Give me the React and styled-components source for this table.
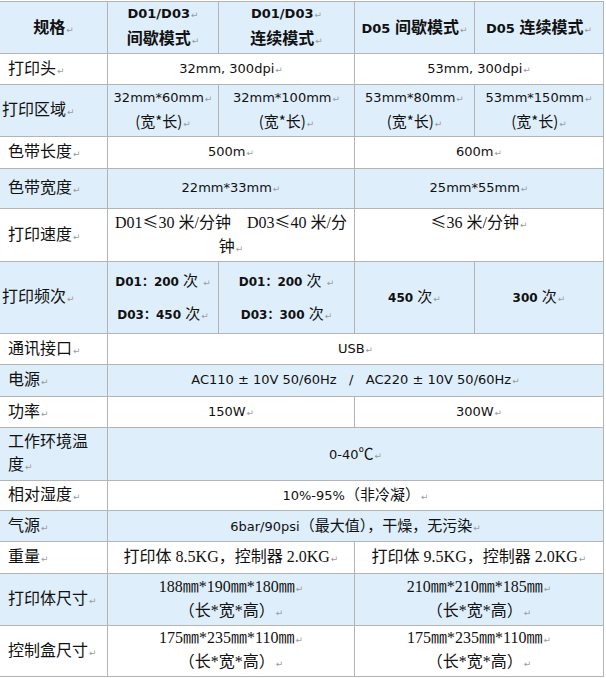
import styled, { createGlobalStyle } from "styled-components";

const GlobalStyle = createGlobalStyle`
  body {
    margin: 0;
    background: #ffffff;
    color: #111111;
    font-family: "DejaVu Sans", "Noto Sans CJK SC", sans-serif;
  }
`;

const line = "#b4b4b4";
const shade = "#deeefa";

const Table = styled.div`
  display: grid;
  grid-template-columns: 108px 111px 136px 120px 129px;
  grid-template-rows: 52px 31px 52px 32px 40px 53px 72px 31px 32px 31px 53px 30px 31px 32px 52px 51px;
  width: 604px;
  margin-top: 1px;
  border-top: 1px solid ${line};
`;

const Box = styled.div`
  box-sizing: border-box;
  grid-column: span ${(p) => p.$span || 1};
  background: ${(p) => (p.$blue ? shade : "#ffffff")};
  border-right: 1px solid ${line};
  border-bottom: 1px solid ${line};
  display: flex;
  align-items: center;
  justify-content: center;
  text-align: center;
  padding: 0 4px;
  font-size: 13px;
  line-height: ${(p) => p.$lh || 22}px;
  white-space: ${(p) => (p.$nowrap ? "nowrap" : "normal")};
`;

const Cell = ({ children, ...rest }) => (
  <Box {...rest}>
    <span>{children}</span>
  </Box>
);

const LabelBox = styled(Box)`
  justify-content: flex-start;
  text-align: left;
  padding: 0 6px 0 ${(p) => (p.$tight ? 2 : 8)}px;
  font-family: "Noto Sans CJK SC", sans-serif;
  font-size: 16px;
  line-height: 23px;
`;

const Label = ({ children, ...rest }) => (
  <LabelBox {...rest}>
    <span>
      {children}
      <Mark />
    </span>
  </LabelBox>
);

const HeadBox = styled(Box)`
  font-weight: 700;
  font-size: 13px;
`;

const Head = ({ children, ...rest }) => (
  <HeadBox $blue {...rest}>
    <span>{children}</span>
  </HeadBox>
);

const Zh = styled.span`
  font-family: "Noto Sans CJK SC", sans-serif;
  font-size: ${(p) => p.$size || 16}px;
  font-weight: ${(p) => (p.$bold ? 700 : 400)};
`;

const Song = styled.span`
  font-family: "Liberation Serif", "Noto Sans CJK SC", serif;
  font-size: 16px;
`;

const Sign = styled.span`
  font-family: "Noto Sans CJK SC", sans-serif;
  display: inline-block;
  width: 16px;
  text-align: center;
`;

const Freq = styled.span`
  font-weight: 700;
  font-size: 12px;
`;

const MarkGlyph = styled.span`
  font-family: "DejaVu Sans", sans-serif;
  font-size: 9px;
  font-weight: 400;
  color: #9c9c9c;
  margin-left: 1px;
`;

const Mark = () => <MarkGlyph>↵</MarkGlyph>;

export default function App() {
  return (
    <>
      <GlobalStyle />
      <Table>
        <HeadBox $blue>
          <Zh $bold>
            规格
            <Mark />
          </Zh>
        </HeadBox>
        <Head>
          D01/D03
          <Mark />
          <br />
          <Zh $bold>间歇模式</Zh>
          <Mark />
        </Head>
        <Head>
          D01/D03
          <Mark />
          <br />
          <Zh $bold>连续模式</Zh>
          <Mark />
        </Head>
        <Head>
          D05 <Zh $bold>间歇模式</Zh>
          <Mark />
        </Head>
        <Head>
          D05 <Zh $bold>连续模式</Zh>
          <Mark />
        </Head>

        <Label>打印头</Label>
        <Cell $span={2}>
          32mm, 300dpi
          <Mark />
        </Cell>
        <Cell $span={2}>
          53mm, 300dpi
          <Mark />
        </Cell>

        <Label $blue $tight>
          打印区域
        </Label>
        <Cell $blue>
          32mm*60mm
          <Mark />
          <br />
          <Zh $size={15}>(宽*长)</Zh>
          <Mark />
        </Cell>
        <Cell $blue>
          32mm*100mm
          <Mark />
          <br />
          <Zh $size={15}>(宽*长)</Zh>
          <Mark />
        </Cell>
        <Cell $blue>
          53mm*80mm
          <Mark />
          <br />
          <Zh $size={15}>(宽*长)</Zh>
          <Mark />
        </Cell>
        <Cell $blue>
          53mm*150mm
          <Mark />
          <br />
          <Zh $size={15}>(宽*长)</Zh>
          <Mark />
        </Cell>

        <Label>色带长度</Label>
        <Cell $span={2}>
          500m
          <Mark />
        </Cell>
        <Cell $span={2}>
          600m
          <Mark />
        </Cell>

        <Label $blue>色带宽度</Label>
        <Cell $blue $span={2}>
          22mm*33mm
          <Mark />
        </Cell>
        <Cell $blue $span={2}>
          25mm*55mm
          <Mark />
        </Cell>

        <Label>打印速度</Label>
        <Cell $span={2} $lh={23} $nowrap>
          <Song>
            D01<Sign>≤</Sign>30 米/分钟　D03<Sign>≤</Sign>40 米/分
            <br />
            钟
          </Song>
          <Mark />
        </Cell>
        <Cell $span={2} $lh={23} $nowrap>
          <Song>
            <Sign>≤</Sign>36 米/分钟
          </Song>
          <Mark />
          <br />
          &nbsp;
        </Cell>

        <Label $blue $tight>
          打印频次
        </Label>
        <Cell $blue $lh={30}>
          <Freq>D01：200</Freq> <Zh $size={15}>次</Zh> <Mark />
          <br />
          <Freq>D03：450</Freq> <Zh $size={15}>次</Zh>
          <Mark />
        </Cell>
        <Cell $blue $lh={30}>
          <Freq>D01：200</Freq> <Zh $size={15}>次</Zh> <Mark />
          <br />
          <Freq>D03：300</Freq> <Zh $size={15}>次</Zh>
          <Mark />
        </Cell>
        <Cell $blue>
          <Freq>450</Freq> <Zh $size={15}>次</Zh>
          <Mark />
        </Cell>
        <Cell $blue>
          <Freq>300</Freq> <Zh $size={15}>次</Zh>
          <Mark />
        </Cell>

        <Label>通讯接口</Label>
        <Cell $span={4}>
          USB
          <Mark />
        </Cell>

        <Label $blue>电源</Label>
        <Cell $blue $span={4}>
          AC110 ± 10V 50/60Hz &nbsp;&nbsp;/&nbsp;&nbsp; AC220 ± 10V 50/60Hz
          <Mark />
        </Cell>

        <Label>功率</Label>
        <Cell $span={2}>
          150W
          <Mark />
        </Cell>
        <Cell $span={2}>
          300W
          <Mark />
        </Cell>

        <Label $blue>工作环境温度</Label>
        <Cell $blue $span={4}>
          0-40<Zh $size={15}>℃</Zh>
          <Mark />
        </Cell>

        <Label>相对湿度</Label>
        <Cell $span={4}>
          10%-95%<Zh $size={15}>（非冷凝）</Zh>
          <Mark />
        </Cell>

        <Label $blue>气源</Label>
        <Cell $blue $span={4}>
          6bar/90psi<Zh $size={15}>（最大值），干燥，无污染</Zh>
          <Mark />
        </Cell>

        <Label>重量</Label>
        <Cell $span={2}>
          <Song>打印体 8.5KG，控制器 2.0KG</Song>
          <Mark />
        </Cell>
        <Cell $span={2}>
          <Song>打印体 9.5KG，控制器 2.0KG</Song>
          <Mark />
        </Cell>

        <Label $blue>打印体尺寸</Label>
        <Cell $blue $span={2} $lh={21}>
          <Song>188㎜*190㎜*180㎜</Song>
          <Mark />
          <br />
          <Song>（长*宽*高）</Song>
          <Mark />
        </Cell>
        <Cell $blue $span={2} $lh={21}>
          <Song>210㎜*210㎜*185㎜</Song>
          <Mark />
          <br />
          <Song>（长*宽*高）</Song>
          <Mark />
        </Cell>

        <Label>控制盒尺寸</Label>
        <Cell $span={2} $lh={21}>
          <Song>175㎜*235㎜*110㎜</Song>
          <Mark />
          <br />
          <Song>（长*宽*高）</Song>
          <Mark />
        </Cell>
        <Cell $span={2} $lh={21}>
          <Song>175㎜*235㎜*110㎜</Song>
          <Mark />
          <br />
          <Song>（长*宽*高）</Song>
          <Mark />
        </Cell>
      </Table>
    </>
  );
}
